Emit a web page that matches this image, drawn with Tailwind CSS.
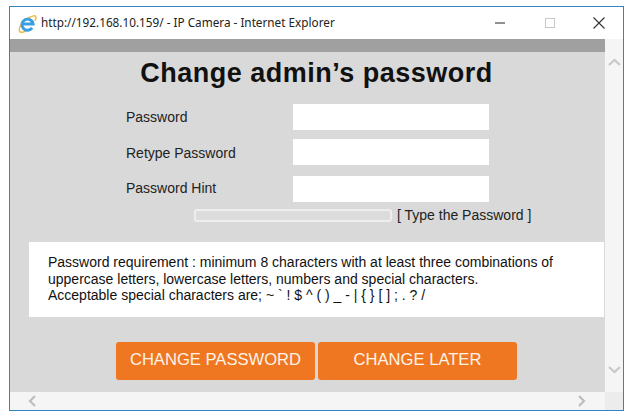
<!DOCTYPE html>
<html lang="en">
<head>
    <meta charset="UTF-8">
    <title>IP Camera - Change password</title>
    <script src="https://cdn.jsdelivr.net/npm/@tailwindcss/browser@4"></script>
</head>
<body class="bg-white w-[628px] h-[414px] overflow-hidden font-['Liberation_Sans',sans-serif]">
    <div class="ml-[9px] mt-[6px] w-[615px] h-[405px] border border-[#2f86c0] flex flex-col bg-white">
        <!-- title bar -->
        <div class="h-[32px] flex items-center shrink-0">
            <svg class="ml-[8px] w-[19px] h-[19px]" viewBox="0 0 18 18">
                <path d="M1.500 16.500C0 12 6 4 14 2C17 1 18 3 16 6.500M1.500 16.500C3 18 6 17 8 15.500" fill="none" stroke="#eebc3c" stroke-width="1.400"/>
                <path d="M5 9.500H14.300A5.300 5.300 0 1 0 13.400 13.200" fill="none" stroke="#3a9ee0" stroke-width="2.800"/>
            </svg>
            <span class="ml-[4px] font-['Noto_Sans',sans-serif] text-[11.75px] text-[#222] whitespace-nowrap">http://192.168.10.159/ - IP Camera - Internet Explorer</span>
            <div class="ml-auto flex items-center h-full">
                <svg class="w-[12px] h-[12px] mr-[38px]" viewBox="0 0 12 12"><path d="M1 6H11" stroke="#222" stroke-width="1"/></svg>
                <svg class="w-[12px] h-[12px] mr-[36px]" viewBox="0 0 12 12"><rect x="1.500" y="1.500" width="9" height="9" fill="none" stroke="#c8c8c8"/></svg>
                <svg class="w-[14px] h-[14px] mr-[17px]" viewBox="0 0 14 14"><path d="M1.500 1.500L12.500 12.500M12.500 1.500L1.500 12.500" stroke="#333" stroke-width="1.100"/></svg>
            </div>
        </div>
        <!-- page + scrollbars -->
        <div class="flex flex-1 min-h-0">
            <div class="w-[595px] flex flex-col">
                <div class="h-[13px] bg-[#a0a0a0] shrink-0"></div>
                <div class="flex-1 bg-[#d9d9d9] flex flex-col">
                    <h1 class="mt-[5px] h-[32px] text-center text-[27px] leading-[32px] font-bold text-[#111] tracking-[0.5px] pl-[18px]">Change admin’s password</h1>
                    <div class="mt-[15px] flex flex-col text-[14px] text-[#222]">
                        <div class="flex items-center h-[26px] mb-[9px]"><span class="ml-[116px] w-[167px]">Password</span><div class="w-[196px] h-[26px] bg-white"></div></div>
                        <div class="flex items-center h-[26px] mb-[11px]"><span class="ml-[116px] w-[167px] pt-[2px]">Retype Password</span><div class="w-[196px] h-[26px] bg-white"></div></div>
                        <div class="flex items-center h-[26px]"><span class="ml-[116px] w-[167px] pb-[2px]">Password Hint</span><div class="w-[196px] h-[26px] bg-white"></div></div>
                    </div>
                    <div class="mt-[4px] flex items-center text-[14px] text-[#222] h-[18px]">
                        <div class="ml-[184px] w-[198px] h-[13px] rounded-[3px] border-2 border-[#eeeeee] bg-[#dcdcdc]"></div>
                        <span class="ml-[5px] whitespace-nowrap">[ Type the Password ]</span>
                    </div>
                    <div class="mt-[18px] ml-[19px] mr-[1px] h-[75px] bg-white pl-[19px] pt-[12px] text-[14px] leading-[16.500px] text-[#111] whitespace-nowrap">
                        <p>Password requirement : minimum 8 characters with at least three combinations of</p>
                        <p>uppercase letters, lowercase letters, numbers and special characters.</p>
                        <p>Acceptable special characters are; ~ ` ! $ ^ ( ) _ - | { } [ ] ; . ? /</p>
                    </div>
                    <div class="mt-[25px] ml-[106px] flex gap-[3px]">
                        <button class="w-[199px] h-[38px] pb-[2px] bg-[#ef7721] rounded-[3px] text-[#fdf3e8] text-[16.600px]">CHANGE PASSWORD</button>
                        <button class="w-[199px] h-[38px] pb-[2px] bg-[#ef7721] rounded-[3px] text-[#fdf3e8] text-[16.600px]">CHANGE LATER</button>
                    </div>
                </div>
                <!-- horizontal scrollbar -->
                <div class="h-[18px] bg-[#f5f5f5] shrink-0 flex items-center justify-between pl-[17px] pr-[18px]">
                    <svg class="w-[10px] h-[12px]" viewBox="0 0 10 12"><path d="M8 1L3 6L8 11" fill="none" stroke="#bdbdbd" stroke-width="2.200"/></svg>
                    <svg class="w-[10px] h-[12px]" viewBox="0 0 10 12"><path d="M2 1L7 6L2 11" fill="none" stroke="#bdbdbd" stroke-width="2.200"/></svg>
                </div>
            </div>
            <!-- vertical scrollbar -->
            <div class="flex-1 bg-[#f5f5f5] flex flex-col items-center pt-[19px]">
                <svg class="w-[13px] h-[9px]" viewBox="0 0 13 9"><path d="M1 7L6.500 2L12 7" fill="none" stroke="#c8c8c8" stroke-width="2.200"/></svg>
                <svg class="w-[13px] h-[9px] mt-[298px]" viewBox="0 0 13 9"><path d="M1 2L6.500 7L12 2" fill="none" stroke="#c8c8c8" stroke-width="2.200"/></svg>
                <div class="mt-auto h-[18px] w-full bg-[#ececec]"></div>
            </div>
        </div>
    </div>
</body>
</html>
